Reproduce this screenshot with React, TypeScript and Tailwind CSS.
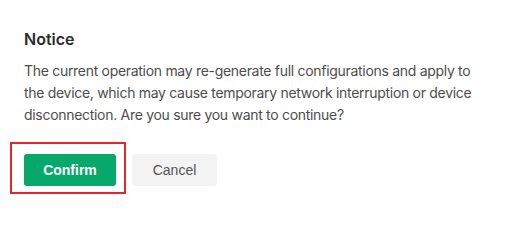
import React from "react";

export default function App() {
  return (
    <div className="relative w-[522px] h-[212px] bg-white overflow-hidden" style={{ fontFamily: "Inter, 'Noto Sans', sans-serif" }}>
      <div className="pl-6 pt-[27px]">
        <h2 className="text-[16px] leading-6 font-semibold text-[#2b2b2b]">Notice</h2>
        <p className="mt-[9px] w-[462px] text-[14px] leading-[22px] tracking-[-0.3px] text-[#4d4d4d]">
          The current operation may re-generate full configurations and apply to the device, which may cause temporary network interruption or device disconnection. Are you sure you want to continue?
        </p>
        <div className="mt-[28px] flex gap-4" style={{ fontFamily: "'Liberation Sans', Arial, sans-serif" }}>
          <button className="h-8 w-[92px] rounded-[3px] bg-[#06a86b] text-[14px] font-bold text-white">Confirm</button>
          <button className="h-8 w-[85px] rounded-[3px] bg-[#f3f3f3] text-[14px] text-[#555555]">Cancel</button>
        </div>
      </div>
      <div className="absolute left-[10px] top-[142px] w-[116px] h-[52px] border-2 border-[#e8242f] pointer-events-none" />
    </div>
  );
}
